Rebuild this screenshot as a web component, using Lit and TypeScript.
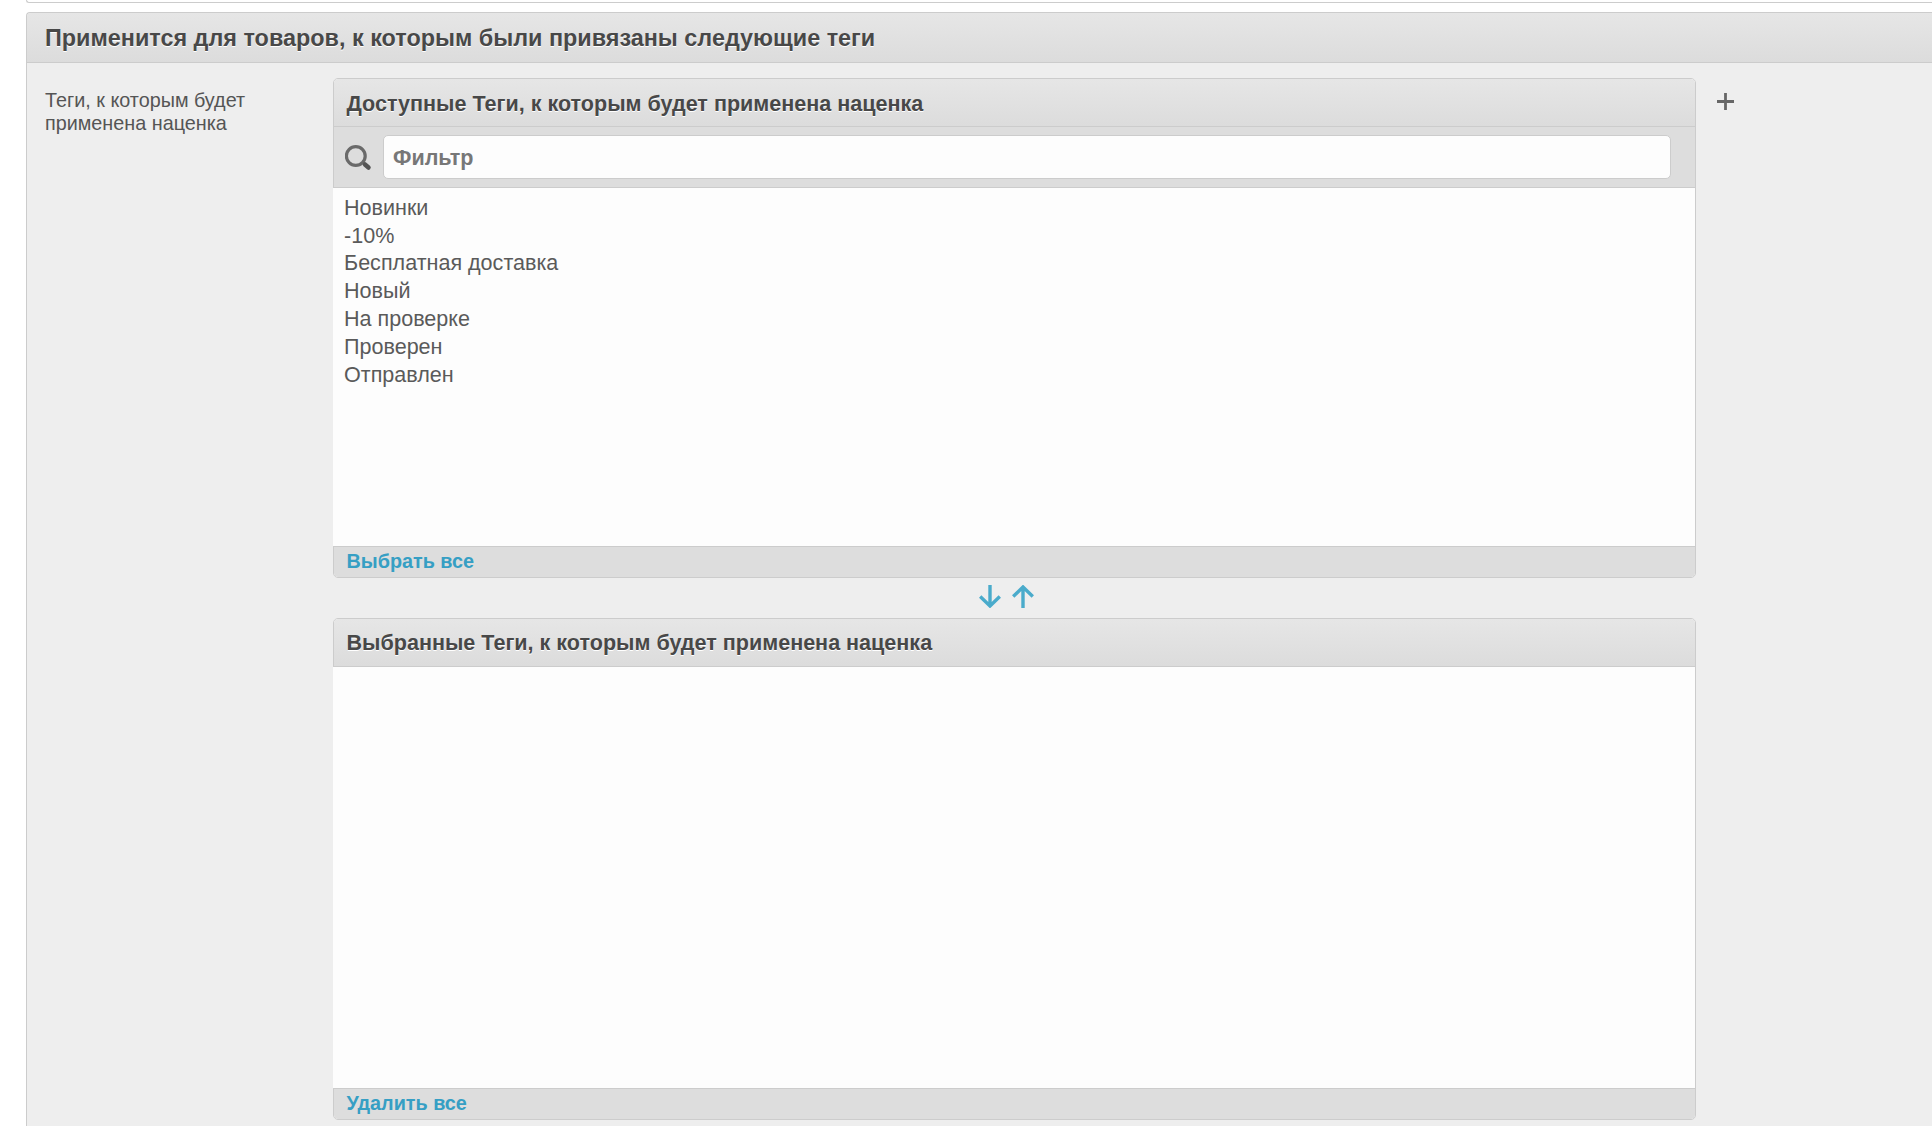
import { LitElement, html, css } from "lit";
import { customElement } from "lit/decorators.js";

const TAGS = ["Новинки", "-10%", "Бесплатная доставка", "Новый", "На проверке", "Проверен", "Отправлен"];

@customElement("app-root")
export class AppRoot extends LitElement {
  static styles = css`
    :host {
      display: block;
      width: 1932px;
      height: 1126px;
      overflow: hidden;
      background: #fff;
      font-family: "Liberation Sans", Arial, sans-serif;
      color: #444;
    }
    .page { padding-left: 26px; }
    .prev {
      height: 2px;
      border: 1px solid #ccc;
      border-top: 0;
      border-right: 0;
      border-bottom-left-radius: 4px;
      margin-bottom: 9px;
    }
    .panel {
      background: #eee;
      border-left: 1px solid #ccc;
      border-top: 1px solid #ccc;
      border-top-left-radius: 4px;
      height: 1200px;
    }
    .head {
      box-sizing: border-box;
      background: linear-gradient(#e6e6e6, #dcdcdc);
      border-bottom: 1px solid #ccc;
      font-weight: bold;
      color: #484848;
      text-shadow: 0 1px 0 #fff;
    }
    .main-head {
      height: 50px;
      line-height: 50px;
      font-size: 23.4px;
      padding-left: 18px;
      border-top-left-radius: 4px;
    }
    .row {
      display: flex;
      align-items: flex-start;
      padding: 15px 0 0 0;
    }
    .label {
      width: 306px;
      box-sizing: border-box;
      padding: 11px 0 0 18px;
      font-size: 19.8px;
      line-height: 23px;
      color: #555;
    }
    .col { width: 1363px; }
    .box {
      border: 1px solid #ccc;
      border-radius: 5px;
      background: #fdfdfd;
    }
    .box-head {
      height: 48px;
      line-height: 48px;
      font-size: 21.55px;
      padding-left: 12.5px;
      border-radius: 4px 4px 0 0;
    }
    .first .box-head { line-height: 49px; }
    .filter {
      height: 61px;
      background: #ddd;
      border-bottom: 1px solid #ccc;
      box-sizing: border-box;
      display: flex;
      align-items: center;
      padding: 0 24px 0 11px;
      gap: 10px;
    }
    .filter svg { flex: none; }
    .input {
      flex: 1;
      height: 44px;
      box-sizing: border-box;
      background: #fdfdfd;
      border: 1px solid #ccc;
      border-radius: 5px;
      font-size: 21.55px;
      font-weight: bold;
      color: #777;
      line-height: 43px;
      padding-left: 9px;
    }
    .list {
      box-sizing: border-box;
      margin: 0 -1px;
      border-right: 1px solid #ccc;
      background: #fdfdfd;
      padding: 5.6px 11px;
      font-size: 21.55px;
      line-height: 27.9px;
      color: #5a5a5a;
    }
    .list.avail { height: 358px; }
    .list.sel { height: 421px; }
    .foot {
      height: 31px;
      box-sizing: border-box;
      background: #ddd;
      border-top: 1px solid #ccc;
      border-radius: 0 0 4px 4px;
      padding-left: 12.5px;
      line-height: 29px;
      font-size: 19.8px;
      font-weight: bold;
      color: #369fc4;
    }
    .arrows {
      box-sizing: border-box;
      height: 40px;
      display: flex;
      justify-content: center;
      align-items: center;
      gap: 11px;
      padding: 0 16px 3px 0;
    }
    .plus { margin: 15px 0 0 21px; }
  `;

  render() {
    const arrow = (d: string) => html`<svg width="22" height="23" viewBox="0 0 22 23" fill="none" stroke="#4aabcb" stroke-width="3.4"><path d=${d}></path></svg>`;
    return html`
      <div class="page">
        <div class="prev"></div>
        <div class="panel">
          <div class="head main-head">Применится для товаров, к которым были привязаны следующие теги</div>
          <div class="row">
            <div class="label">Теги, к которым будет<br />применена наценка</div>
            <div class="col">
              <div class="box first">
                <div class="head box-head">Доступные Теги, к которым будет применена наценка</div>
                <div class="filter">
                  <svg width="28" height="30" viewBox="0 0 28 30" fill="none">
                    <circle cx="10.8" cy="14" r="9.4" stroke="#6a6a6a" stroke-width="3.2"></circle>
                    <path d="M20 22.5 L23.5 25.5" stroke="#555" stroke-width="4.5" stroke-linecap="round"></path>
                  </svg>
                  <div class="input">Фильтр</div>
                </div>
                <div class="list avail">${TAGS.map((t) => html`<div>${t}</div>`)}</div>
                <div class="foot">Выбрать все</div>
              </div>
              <div class="arrows">
                ${arrow("M11 0 V21 M1.2 11.5 L11 21 L20.8 11.5")}
                ${arrow("M11 23 V2 M1.2 11.5 L11 2 L20.8 11.5")}
              </div>
              <div class="box">
                <div class="head box-head">Выбранные Теги, к которым будет применена наценка</div>
                <div class="list sel"></div>
                <div class="foot">Удалить все</div>
              </div>
            </div>
            <svg class="plus" width="17" height="17" viewBox="0 0 17 17" stroke="#666" stroke-width="2.8"><path d="M0 8.5 H17 M8.5 0 V17"></path></svg>
          </div>
        </div>
      </div>
    `;
  }
}
